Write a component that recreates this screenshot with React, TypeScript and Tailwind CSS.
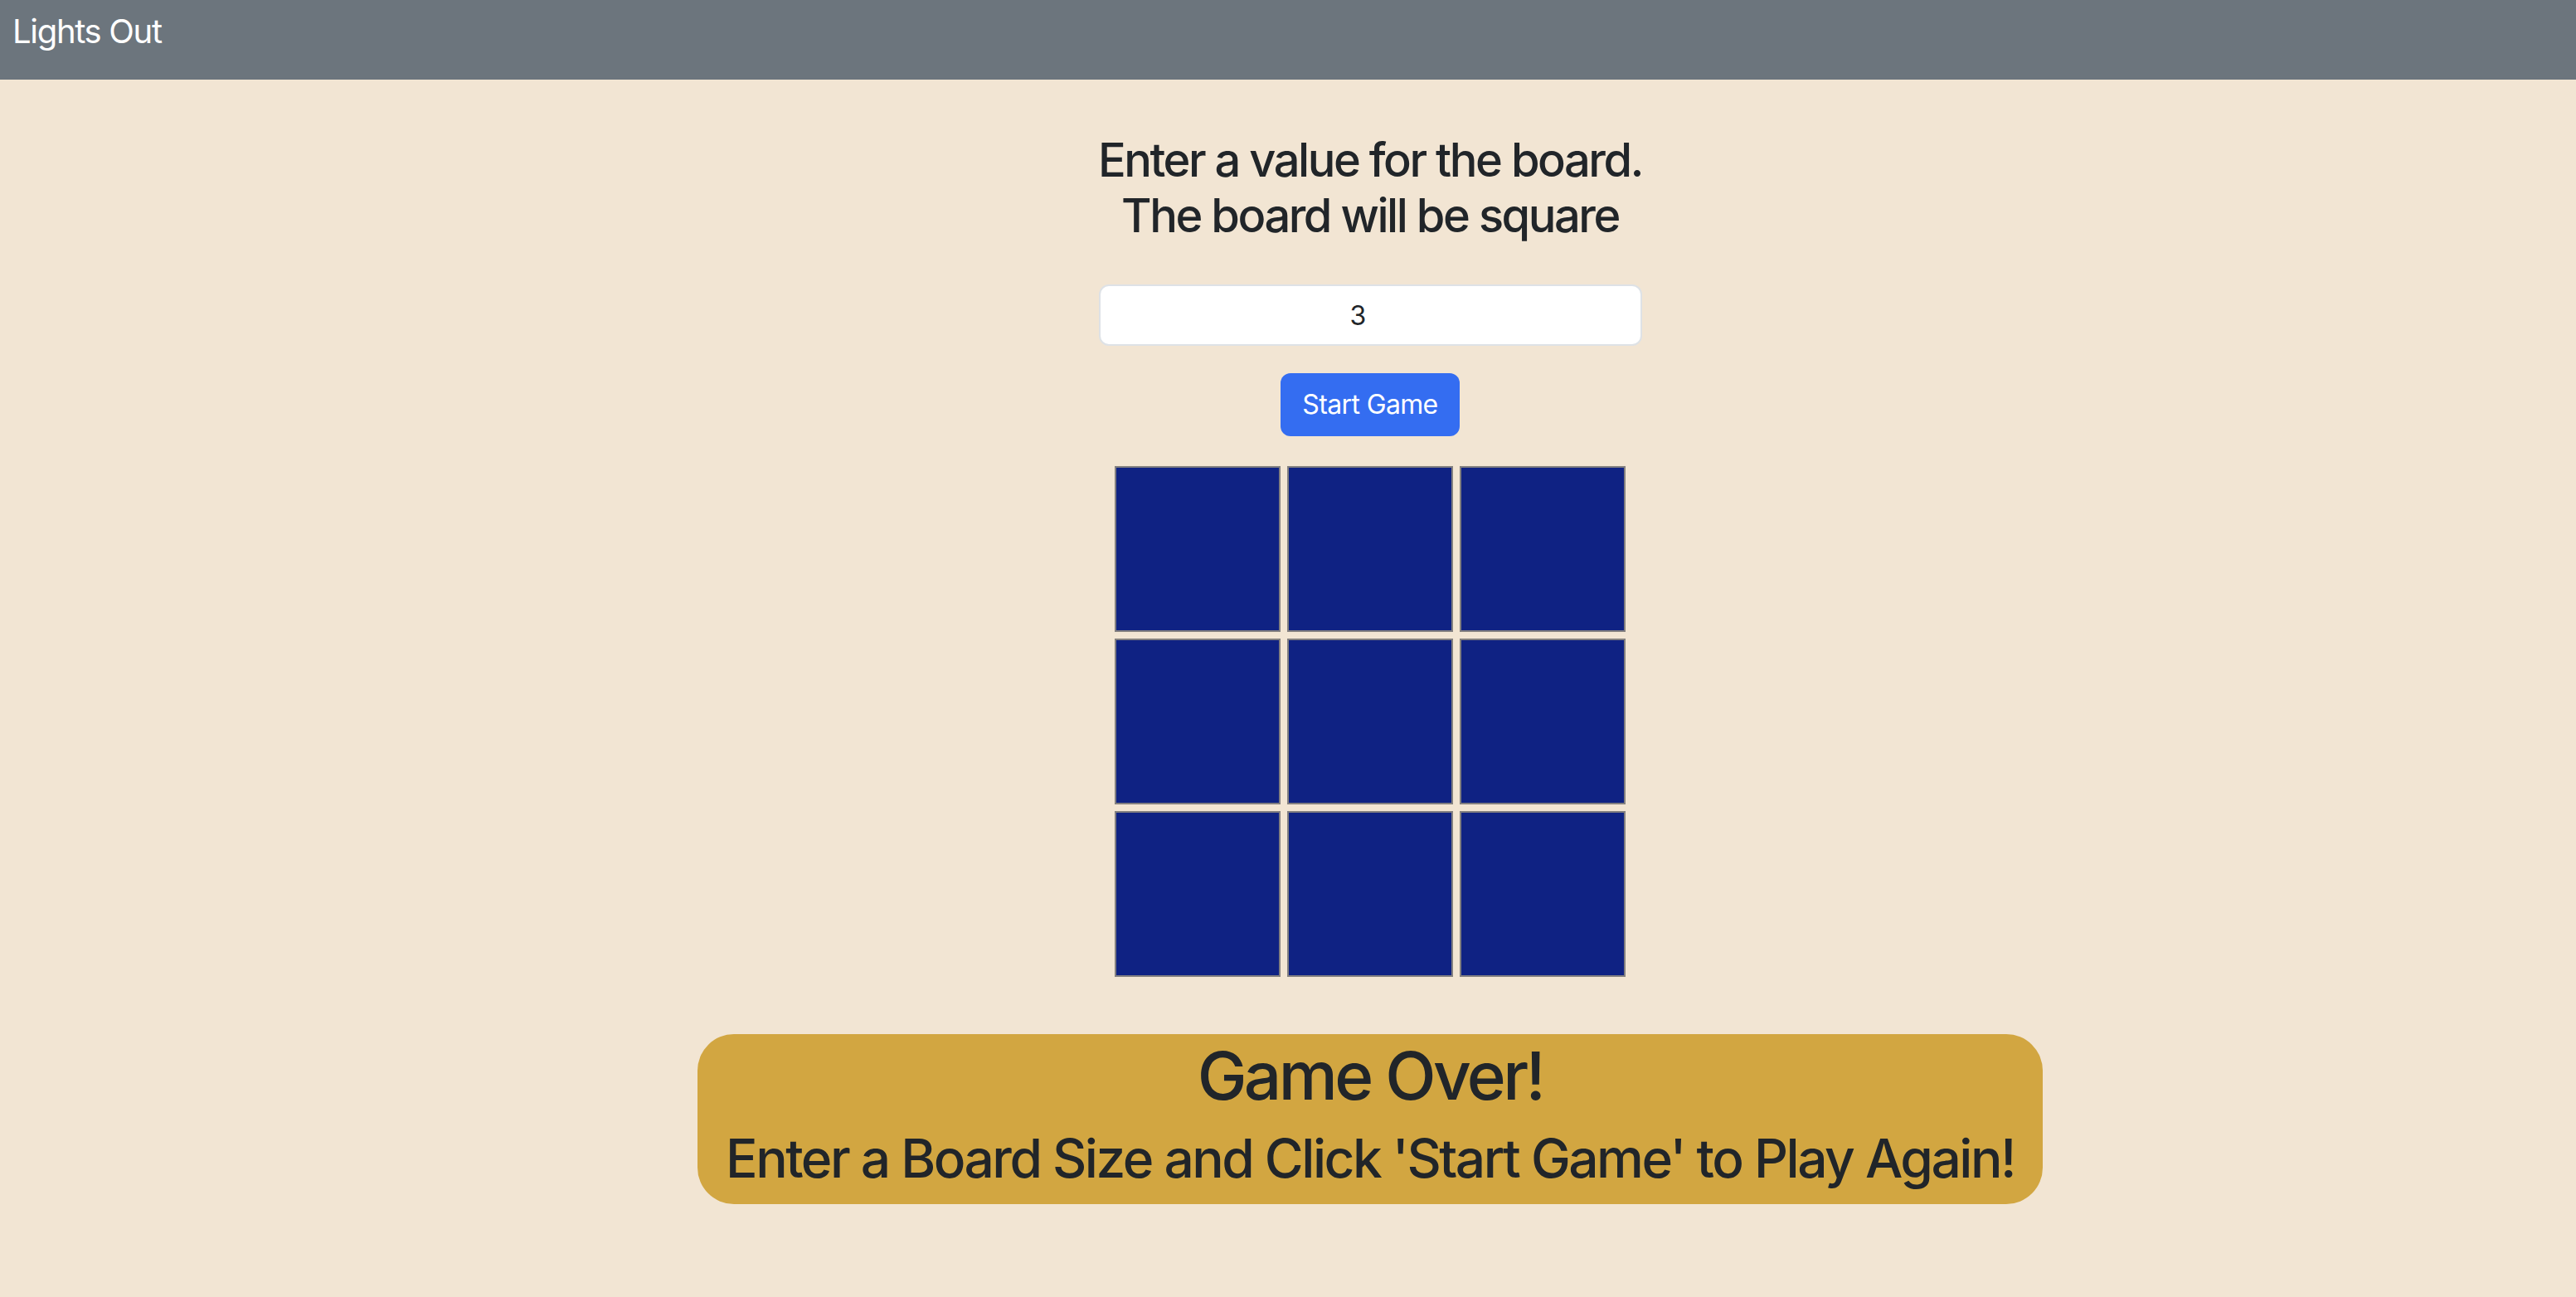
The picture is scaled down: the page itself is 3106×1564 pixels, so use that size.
import React from "react";

export default function App() {
  const cells = Array.from({ length: 9 });
  return (
    <div className="min-h-screen bg-[#f2e5d3] font-['Inter','Noto_Sans',sans-serif] text-[#212529]">
      <nav className="h-[96px] bg-[#6c757d] px-[15px] pt-[8px]">
        <span className="text-[40px] leading-[60px] text-white tracking-[-0.033em]">Lights Out</span>
      </nav>
      <main className="pl-[198px] flex flex-col items-center">
        <h3 className="mt-[64px] text-[56px] leading-[1.2] font-medium text-center tracking-[-0.044em]">
          <span className="block">Enter a value for the board.</span>
          <span className="block">The board will be square</span>
        </h3>
        <input
          readOnly
          value="3"
          className="mt-[49px] w-[655px] h-[74px] rounded-[12px] border-2 border-[#dee2e6] bg-white pr-[29px] text-center text-[32px] text-[#212529] outline-none"
        />
        <button className="mt-[33px] h-[76px] px-[26px] rounded-[12px] bg-[#346df1] text-white text-[32px] leading-[1.5] tracking-[-0.02em]">
          Start Game
        </button>
        <div className="mt-[36px] grid grid-cols-3 gap-[8px]">
          {cells.map((_, i) => (
            <div key={i} className="w-[200px] h-[200px] bg-[#0f2283] border-2 border-[#838080]" />
          ))}
        </div>
        <div className="mt-[69px] mb-[100px] h-[205px] rounded-[44px] bg-[#d2a641] px-[34px] pt-[2px] flex flex-col items-center">
          <h1 className="text-[80px] leading-[1.2] font-medium tracking-[-0.045em]">Game Over!</h1>
          <h2 className="mt-[14px] text-[64px] leading-[1.2] font-medium whitespace-nowrap tracking-[-0.039em]">
            Enter a Board Size and Click 'Start Game' to Play Again!
          </h2>
        </div>
      </main>
    </div>
  );
}
